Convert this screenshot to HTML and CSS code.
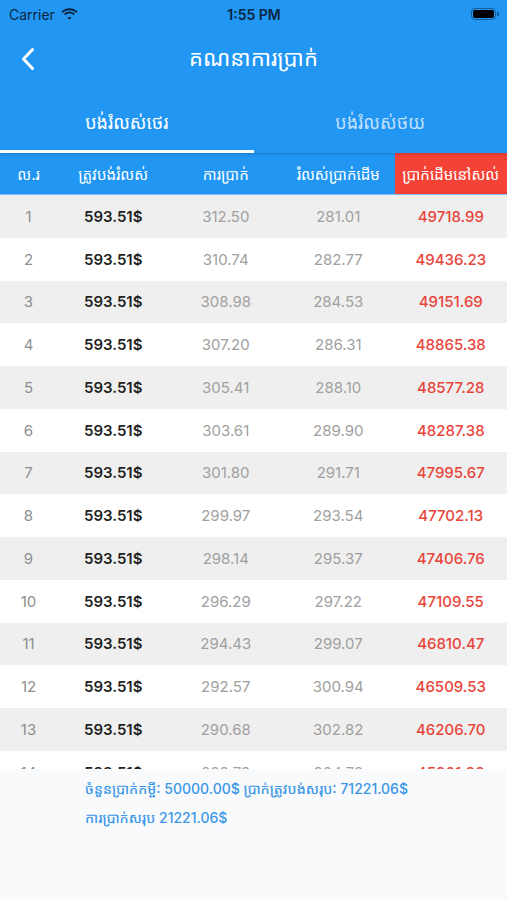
FILE: index.html
```html
<!DOCTYPE html>
<html lang="km">
<head>
  <meta charset="UTF-8">
  <meta name="viewport" content="width=device-width, initial-scale=1.0">
  <title>គណនាការប្រាក់</title>
  <link rel="stylesheet" href="styles.css">
</head>
<body>
  <div class="screen">
    <!-- Top bar -->
    <header class="appbar">
      <div class="status-bar">
        <div class="status-left">
          <span>Carrier</span>
          <svg class="wifi" width="17" height="12" viewBox="0 0 17 12">
            <path d="M8.5 2.2c2.6 0 5 1 6.8 2.7l1.3-1.4C14.4 1.4 11.6.2 8.5.2S2.6 1.4.4 3.5l1.3 1.4C3.5 3.2 5.9 2.2 8.5 2.2z" fill="#0b2640"/>
            <path d="M8.5 5.6c1.6 0 3.1.6 4.2 1.7l1.3-1.4C12.6 4.5 10.6 3.6 8.5 3.6S4.4 4.5 3 5.9l1.3 1.4c1.1-1.1 2.6-1.7 4.2-1.7z" fill="#0b2640"/>
            <path d="M8.5 8.9c.8 0 1.5.3 2 .8L8.5 11.8 6.5 9.7c.5-.5 1.2-.8 2-.8z" fill="#0b2640"/>
          </svg>
        </div>
        <div class="status-time">1:55 PM</div>
        <div class="status-right">
          <div class="battery"><div class="battery-fill"></div></div>
          <div class="battery-cap"></div>
        </div>
      </div>

      <div class="navbar">
        <svg class="back" width="14" height="24" viewBox="0 0 14 24">
          <path d="M11.5 2.5L2.5 12l9 9.5" fill="none" stroke="#fff" stroke-width="3" stroke-linecap="round" stroke-linejoin="round"/>
        </svg>
        <h1 class="title">គណនាការប្រាក់</h1>
      </div>

      <div class="tabs">
        <div class="tab active">បង់រំលស់ថេរ</div>
        <div class="tab">បង់រំលស់ថយ</div>
      </div>
    </header>

    <!-- Table header -->
    <div class="row head">
      <div class="cell c-no">ល.រ</div>
      <div class="cell">ត្រូវបង់រំលស់</div>
      <div class="cell">ការប្រាក់</div>
      <div class="cell">រំលស់ប្រាក់ដើម</div>
      <div class="cell c-left">ប្រាក់ដើមនៅសល់</div>
    </div>

    <!-- Table body -->
    <div class="table-body" id="tableBody"></div>

    <!-- Summary -->
    <footer class="summary">
      <p>ចំនួនប្រាក់កម្ចី: 50000.00$ ប្រាក់ត្រូវបង់សរុប: 71221.06$</p>
      <p>ការប្រាក់សរុប 21221.06$</p>
    </footer>
  </div>

  <script>
    // schedule rows: interest, principal, balance
    const rows = [
      ['312.50', '281.01', '49718.99'],
      ['310.74', '282.77', '49436.23'],
      ['308.98', '284.53', '49151.69'],
      ['307.20', '286.31', '48865.38'],
      ['305.41', '288.10', '48577.28'],
      ['303.61', '289.90', '48287.38'],
      ['301.80', '291.71', '47995.67'],
      ['299.97', '293.54', '47702.13'],
      ['298.14', '295.37', '47406.76'],
      ['296.29', '297.22', '47109.55'],
      ['294.43', '299.07', '46810.47'],
      ['292.57', '300.94', '46509.53'],
      ['290.68', '302.82', '46206.70'],
      ['288.79', '304.72', '45901.98'],
      ['286.89', '306.62', '45595.36']
    ];

    const body = document.getElementById('tableBody');
    rows.forEach((r, i) => {
      const row = document.createElement('div');
      row.className = 'row';
      row.innerHTML =
        '<div class="cell c-no">' + (i + 1) + '</div>' +
        '<div class="cell c-pay">593.51$</div>' +
        '<div class="cell c-grey">' + r[0] + '</div>' +
        '<div class="cell c-grey">' + r[1] + '</div>' +
        '<div class="cell c-red">' + r[2] + '</div>';
      body.appendChild(row);
    });
  </script>
</body>
</html>
```

FILE: styles.css
```css
* {
  margin: 0;
  padding: 0;
  box-sizing: border-box;
}

body {
  font-family: 'Inter', 'Noto Sans Khmer', 'Khmer OS', 'Noto Sans', sans-serif;
  background-color: #f9fafb;
}

.screen {
  display: flex;
  flex-direction: column;
  height: 900px;
  overflow: hidden;
}

/* App bar */
.appbar {
  background-color: #2196f3;
  color: #fff;
  position: relative;
  z-index: 1;
  box-shadow: 0 1px 3px rgba(0, 0, 0, 0.18);
}

.status-bar {
  height: 28px;
  display: flex;
  align-items: center;
  justify-content: space-between;
  padding: 0 8px 0 9px;
  color: #0b2640;
  font-size: 14px;
}

.status-left {
  display: flex;
  align-items: center;
  gap: 6px;
  width: 120px;
}

.status-time {
  font-weight: 600;
  font-size: 14px;
}

.status-right {
  display: flex;
  align-items: center;
  justify-content: flex-end;
  width: 120px;
}

.battery {
  width: 25px;
  height: 12px;
  border: 1px solid rgba(11, 38, 64, 0.5);
  border-radius: 4px;
  padding: 1px;
}

.battery-fill {
  width: 100%;
  height: 100%;
  background-color: #000;
  border-radius: 2px;
}

.battery-cap {
  width: 2px;
  height: 4px;
  margin-left: 1px;
  background-color: rgba(11, 38, 64, 0.5);
  border-radius: 0 1px 1px 0;
}

.navbar {
  height: 64px;
  display: flex;
  align-items: center;
  justify-content: center;
  position: relative;
}

.back {
  position: absolute;
  left: 21px;
  top: 19px;
}

.title {
  font-size: 22px;
  font-weight: 400;
  margin-top: -6px;
}

.tabs {
  display: flex;
  height: 61px;
}

.tab {
  flex: 1;
  display: flex;
  align-items: center;
  justify-content: center;
  font-size: 18px;
  color: rgba(255, 255, 255, 0.72);
  border-bottom: 3px solid transparent;
  padding-top: 2px;
}

.tab.active {
  color: #fff;
  border-bottom-color: #fff;
}

/* Table */
.row {
  display: grid;
  grid-template-columns: 57px 1fr 1fr 1fr 1fr;
  height: 42.75px;
  flex-shrink: 0;
}

.row.head {
  height: 42px;
  background-color: #2196f3;
  color: #fff;
  border-bottom: 1px solid #7cc0f7;
}

.row.head .cell {
  color: #fff;
  font-size: 15px;
}

.row.head .c-left {
  background-color: #f44336;
}

.cell {
  display: flex;
  align-items: center;
  justify-content: center;
  font-size: 15px;
}

.table-body {
  flex: 1;
  overflow: hidden;
}

.table-body .row:nth-child(odd) {
  background-color: #efefef;
}

.table-body .row:nth-child(even) {
  background-color: #fff;
}

.c-no {
  color: #8e8e8e;
}

.c-pay {
  color: #222;
  font-weight: 600;
}

.c-grey {
  color: #a0a0a0;
}

.c-red {
  color: #e8453a;
  font-weight: 500;
}

/* Summary */
.summary {
  height: 131px;
  flex-shrink: 0;
  background-color: #f9fafb;
  padding: 5px 0 0 85px;
  color: #3b97e8;
  font-size: 14px;
  font-weight: 500;
}

.summary p {
  line-height: 29px;
}
```
